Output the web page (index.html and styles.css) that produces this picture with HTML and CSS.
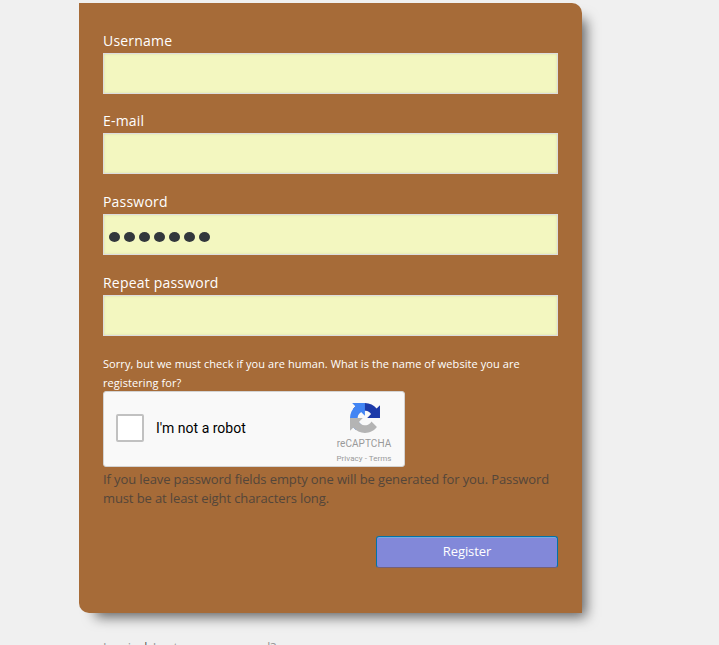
FILE: index.html
```html
<!DOCTYPE html>
<html lang="en">
<head>
<meta charset="utf-8">
<title>Register</title>
<link rel="stylesheet" href="styles.css">
</head>
<body>
<main class="login">
  <form class="card">
    <div class="field"><label for="user">Username</label><input id="user" type="text"></div>
    <div class="field"><label for="email">E-mail</label><input id="email" type="text"></div>
    <div class="field"><label>Password</label>
      <div class="input dots"><i></i><i></i><i></i><i></i><i></i><i></i><i></i></div>
    </div>
    <div class="field"><label for="repeat">Repeat password</label><input id="repeat" type="text"></div>
    <p class="question">Sorry, but we must check if you are human. What is the name of website you are registering for?</p>
    <div class="captcha">
      <span class="check"></span>
      <span class="robot">I'm not a robot</span>
      <div class="brand">
        <svg class="logo" viewBox="0 0 64 64">
          <path fill="#1c3aa9" d="M64 31.955l-.033-1.37V4.687l-7.16 7.16C50.948 4.674 42.033.093 32.05.093c-10.4 0-19.622 4.96-25.458 12.64l11.736 11.86a15.55 15.55 0 0 1 4.754-5.334c2.05-1.6 4.952-2.906 8.968-2.906.485 0 .86.057 1.135.163 4.976.393 9.288 3.14 11.828 7.124l-8.307 8.307L64 31.953"/>
          <path fill="#4285f4" d="M31.862.094l-1.37.033H4.594l7.16 7.16C4.58 13.147 0 22.06 0 32.046c0 10.4 4.96 19.622 12.64 25.458L24.5 45.768a15.55 15.55 0 0 1-5.334-4.754c-1.6-2.05-2.906-4.952-2.906-8.968 0-.485.057-.86.163-1.135.393-4.976 3.14-9.288 7.124-11.828l8.307 8.307L31.86.095"/>
          <path fill="#b4b4b4" d="M.001 32.045l.033 1.37v25.898l7.16-7.16c5.86 7.173 14.774 11.754 24.76 11.754 10.4 0 19.622-4.96 25.458-12.64l-11.736-11.86a15.55 15.55 0 0 1-4.754 5.334c-2.05 1.6-4.952 2.906-8.968 2.906-.485 0-.86-.057-1.135-.163-4.976-.393-9.288-3.14-11.828-7.124l8.307-8.307L0 32.047"/>
        </svg>
        <span class="name">reCAPTCHA</span>
        <span class="terms">Privacy - Terms</span>
      </div>
    </div>
    <p class="hint">If you leave password fields empty one will be generated for you. Password must be at least eight characters long.</p>
    <button class="submit" type="button">Register</button>
  </form>
  <p class="nav"><a>Log in</a> <b>|</b> <a>Lost your password?</a></p>
</main>
</body>
</html>
```
FILE: styles.css
```css
* { box-sizing: border-box; }
html { overflow: hidden; background: #f0f0f0; }
body { margin: 0; height: 645px; overflow: hidden; font-family: "Open Sans", sans-serif; }
p { margin: 0; }
.login { width: 503px; margin-left: 79px; padding-top: 3px; }
.card {
  height: 610px;
  padding: 27px 24px 0;
  background: #a66b38;
  border-radius: 0 10px 0 10px;
  box-shadow: 10px 10px 13px -6px rgba(0, 0, 0, .6);
  display: flex;
  flex-direction: column;
}
.field { height: 81px; flex: none; }
.field:first-child { height: 80px; }
.field label { display: block; height: 23px; line-height: 21px; font-size: 14px; letter-spacing: .2px; color: #fff; }
.field input, .input {
  display: block;
  width: 455px;
  height: 41px;
  margin: 0;
  padding: 0 5px;
  border: 1px solid #ddd;
  background: #f3f7c0;
  box-shadow: inset 0 0 3px rgba(0, 0, 0, .1);
}
.dots { display: flex; align-items: center; gap: 4px; padding-top: 5px !important; }
.dots i { width: 11px; height: 10px; border-radius: 50%; background: #32373c; }
.question { flex: none; height: 37px; margin-top: 1px; font-size: 11px; line-height: 19px; letter-spacing: .07px; color: #fff; }
.captcha {
  flex: none;
  width: 302px;
  height: 76px;
  padding: 0 12px;
  display: flex;
  align-items: center;
  background: #f9f9f9;
  border: 1px solid #d3d3d3;
  border-radius: 3px;
}
.check { width: 28px; height: 28px; margin-top: -2px; border: 2px solid #c1c1c1; border-radius: 2px; background: #fff; }
.robot { margin: -2px 0 0 12px; font: 14px Roboto, sans-serif; color: #000; }
.brand { margin-left: auto; width: 56px; height: 74px; padding-top: 11px; display: flex; flex-direction: column; align-items: center; color: #999; }
.logo { width: 30px; height: 30px; margin-left: 2px; flex: none; }
.name { margin-top: 5px; font: 10px/12px Roboto, sans-serif; letter-spacing: .05px; }
.terms { margin-top: 3px; font: 8px/12px Roboto, sans-serif; letter-spacing: .05px; white-space: nowrap; }
.hint { margin-top: 3px; font-size: 13px; line-height: 19px; letter-spacing: -.11px; color: #54463a; }
.submit {
  align-self: flex-end;
  width: 182px;
  height: 32px;
  margin-top: 28px;
  padding: 0 0 2px;
  border: 1px solid #0073aa;
  border-bottom-color: #746079;
  border-radius: 3px;
  background: #8288d9;
  box-shadow: inset 0 1px 0 #78a9dc;
  color: #fff;
  font: 13px "Open Sans", sans-serif;
  letter-spacing: -.1px;
}
.nav { margin: 24px 24px 0; font-size: 13px; line-height: 20px; letter-spacing: -.05px; color: #999; white-space: nowrap; }
.nav b { font-weight: 400; color: #444; }
```
